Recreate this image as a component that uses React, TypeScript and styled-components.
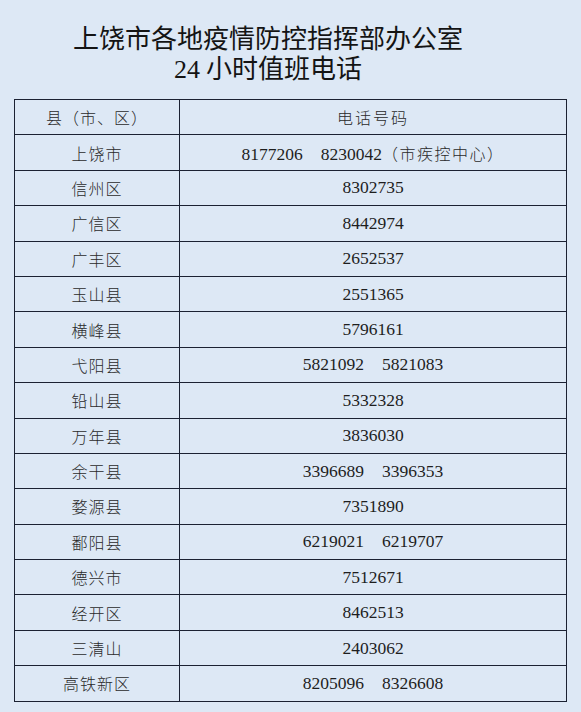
import React from "react";
import styled, { createGlobalStyle } from "styled-components";

const GlobalStyle = createGlobalStyle`
  html, body {
    margin: 0;
    padding: 0;
    background: #dde8f5;
  }
`;

const Page = styled.div`
  width: 581px;
  height: 712px;
  background: #dde8f5;
  padding-top: 22px;
  box-sizing: border-box;
  overflow: hidden;
`;

const Title = styled.h1`
  margin: 0 45px 0 0;
  font-family: "Noto Sans CJK SC", "Liberation Sans", sans-serif;
  font-weight: 400;
  font-size: 26px;
  color: #141414;
  text-align: center;
`;

const TitleLine = styled.div`
  line-height: 30px;
`;

const Num = styled.span`
  font-family: "Liberation Serif", "Noto Sans CJK SC", serif;
`;

const Table = styled.table`
  margin: 14px 0 0 14px;
  width: 553px;
  border-collapse: collapse;
  table-layout: fixed;
`;

const Row = styled.tr`
  height: 35.4px;
`;

const Cell = styled.td<{ $spacing?: number }>`
  border: 1px solid #1b2132;
  padding: 0;
  text-align: center;
  vertical-align: middle;
  font-family: "Noto Sans CJK SC", sans-serif;
  font-weight: 300;
  font-size: 16px;
  letter-spacing: ${(p) => p.$spacing ?? 1}px;
  color: #2a2a2a;
`;

const NameCol = styled.col`
  width: 165px;
`;

const Phones = styled.div`
  display: flex;
  justify-content: center;
  align-items: baseline;
  gap: 18px;
`;

const Phone = styled.span`
  font-family: "Liberation Serif", serif;
  font-size: 17.5px;
  letter-spacing: 0;
  color: #1e1e1e;
`;

const Note = styled.span`
  font-family: "Noto Sans CJK SC", sans-serif;
  font-weight: 300;
  font-size: 16px;
  letter-spacing: 1.5px;
  color: #2a2a2a;
`;

type Entry = { name: string; phones: string[]; note?: string };

const rows: Entry[] = [
  { name: "上饶市", phones: ["8177206", "8230042"], note: "（市疾控中心）" },
  { name: "信州区", phones: ["8302735"] },
  { name: "广信区", phones: ["8442974"] },
  { name: "广丰区", phones: ["2652537"] },
  { name: "玉山县", phones: ["2551365"] },
  { name: "横峰县", phones: ["5796161"] },
  { name: "弋阳县", phones: ["5821092", "5821083"] },
  { name: "铅山县", phones: ["5332328"] },
  { name: "万年县", phones: ["3836030"] },
  { name: "余干县", phones: ["3396689", "3396353"] },
  { name: "婺源县", phones: ["7351890"] },
  { name: "鄱阳县", phones: ["6219021", "6219707"] },
  { name: "德兴市", phones: ["7512671"] },
  { name: "经开区", phones: ["8462513"] },
  { name: "三清山", phones: ["2403062"] },
  { name: "高铁新区", phones: ["8205096", "8326608"] },
];

export default function App() {
  return (
    <Page>
      <GlobalStyle />
      <Title>
        <TitleLine>上饶市各地疫情防控指挥部办公室</TitleLine>
        <TitleLine>
          <Num>24</Num> 小时值班电话
        </TitleLine>
      </Title>
      <Table>
        <colgroup>
          <NameCol />
          <col />
        </colgroup>
        <tbody>
          <Row>
            <Cell>县（市、区）</Cell>
            <Cell $spacing={2}>电话号码</Cell>
          </Row>
          {rows.map((r) => (
            <Row key={r.name}>
              <Cell>{r.name}</Cell>
              <Cell>
                <Phones>
                  {r.phones.map((p, i) => (
                    <Phone key={p}>
                      {p}
                      {r.note && i === r.phones.length - 1 && <Note>{r.note}</Note>}
                    </Phone>
                  ))}
                </Phones>
              </Cell>
            </Row>
          ))}
        </tbody>
      </Table>
    </Page>
  );
}
